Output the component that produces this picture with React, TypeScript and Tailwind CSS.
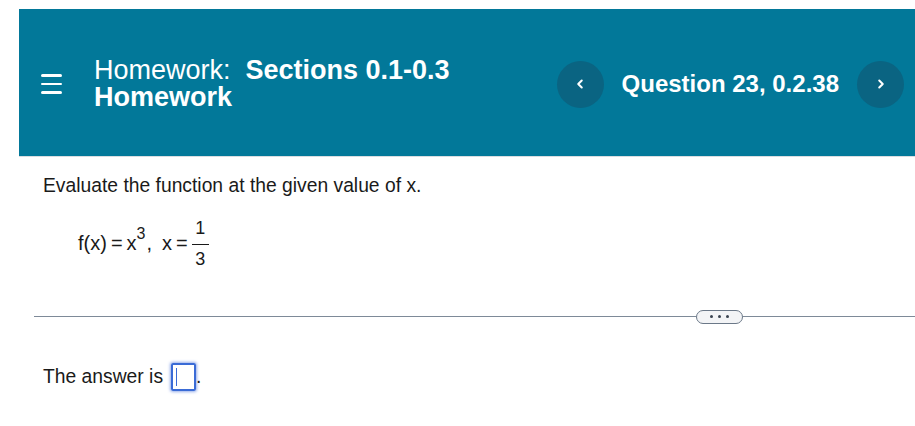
import { ChevronLeft, ChevronRight } from 'lucide-react'

const font = { fontFamily: '"Liberation Sans", Arial, sans-serif' }

function NavButton({ dir }: { dir: 'prev' | 'next' }) {
  return (
    <button
      type="button"
      className="flex h-[47px] w-[47px] items-center justify-center rounded-full bg-[#0a6482] text-white"
    >
      {dir === 'prev' ? <ChevronLeft size={14} strokeWidth={3.5} /> : <ChevronRight size={14} strokeWidth={3.5} />}
    </button>
  )
}

export default function App() {
  return (
    <div className="min-h-[426px] bg-white pt-[9px] pl-[19px] text-[#1a1a1a]" style={font}>
      {/* Header */}
      <div className="flex h-[148px] items-center border-b border-[#d9dde1] bg-[#027899] pt-[3px] pr-[11px] text-white">
        <div className="ml-[22px] flex w-[21px] flex-col gap-[6px]">
          <span className="h-[2.5px] rounded-full bg-white" />
          <span className="h-[2.5px] rounded-full bg-white" />
          <span className="h-[2.5px] rounded-full bg-white" />
        </div>
        <h1 className="ml-[32px] flex flex-col text-[27px] leading-[27px]">
          <span>
            Homework:<span className="ml-[15px] font-bold">Sections 0.1-0.3</span>
          </span>
          <span className="font-bold">Homework</span>
        </h1>
        <div className="ml-auto flex items-center">
          <NavButton dir="prev" />
          <span className="mx-[18px] text-[24px] font-bold">Question 23, 0.2.38</span>
          <NavButton dir="next" />
        </div>
      </div>

      {/* Question */}
      <div className="pt-[18px] pl-[24px] text-[19.3px] leading-[22px]">
        <p>Evaluate the function at the given value of x.</p>
        <div className="mt-[22px] ml-[35px] flex items-center text-[20px] leading-[22px]">
          <span>f(x)</span>
          <span className="mx-[4px]">=</span>
          <span>x</span>
          <span className="relative -top-[9px] text-[16px]">3</span>
          <span className="ml-[1px]">,</span>
          <span className="ml-[10px]">x</span>
          <span className="mx-[4px]">=</span>
          <span className="flex flex-col items-center text-[18px] leading-[18px]">
            <span className="mb-[7px] px-[3px]">1</span>
            <span className="h-[1px] w-[17px] bg-[#1a1a1a]" />
            <span className="mt-[4.7px] px-[3px]">3</span>
          </span>
        </div>
      </div>

      {/* Divider */}
      <div className="mt-[42px] ml-[15px] flex items-center">
        <div className="h-[1px] flex-1 bg-[#7e8a98]" />
        <button
          type="button"
          className="flex h-[14px] w-[47px] items-center justify-center gap-[5px] rounded-full border border-[#6b7888] bg-[#f3f4f6]"
        >
          <span className="h-[3px] w-[3px] rounded-full bg-[#3a4350]" />
          <span className="h-[3px] w-[3px] rounded-full bg-[#3a4350]" />
          <span className="h-[3px] w-[3px] rounded-full bg-[#3a4350]" />
        </button>
        <div className="h-[1px] w-[172px] bg-[#7e8a98]" />
      </div>

      {/* Answer */}
      <div className="mt-[39px] ml-[24px] flex items-end text-[19.3px] leading-[22px]">
        <span className="mb-[3px]">The answer is</span>
        <span className="ml-[8px] flex h-[28px] w-[25px] items-center rounded-[2px] border-2 border-[#3a6bd6] pl-[3px] shadow-[0_0_3px_1px_rgba(80,120,220,0.6)]">
          <span className="h-[18px] w-[1px] bg-[#3a6bd6]" />
        </span>
        <span className="mb-[3px]">.</span>
      </div>
    </div>
  )
}
